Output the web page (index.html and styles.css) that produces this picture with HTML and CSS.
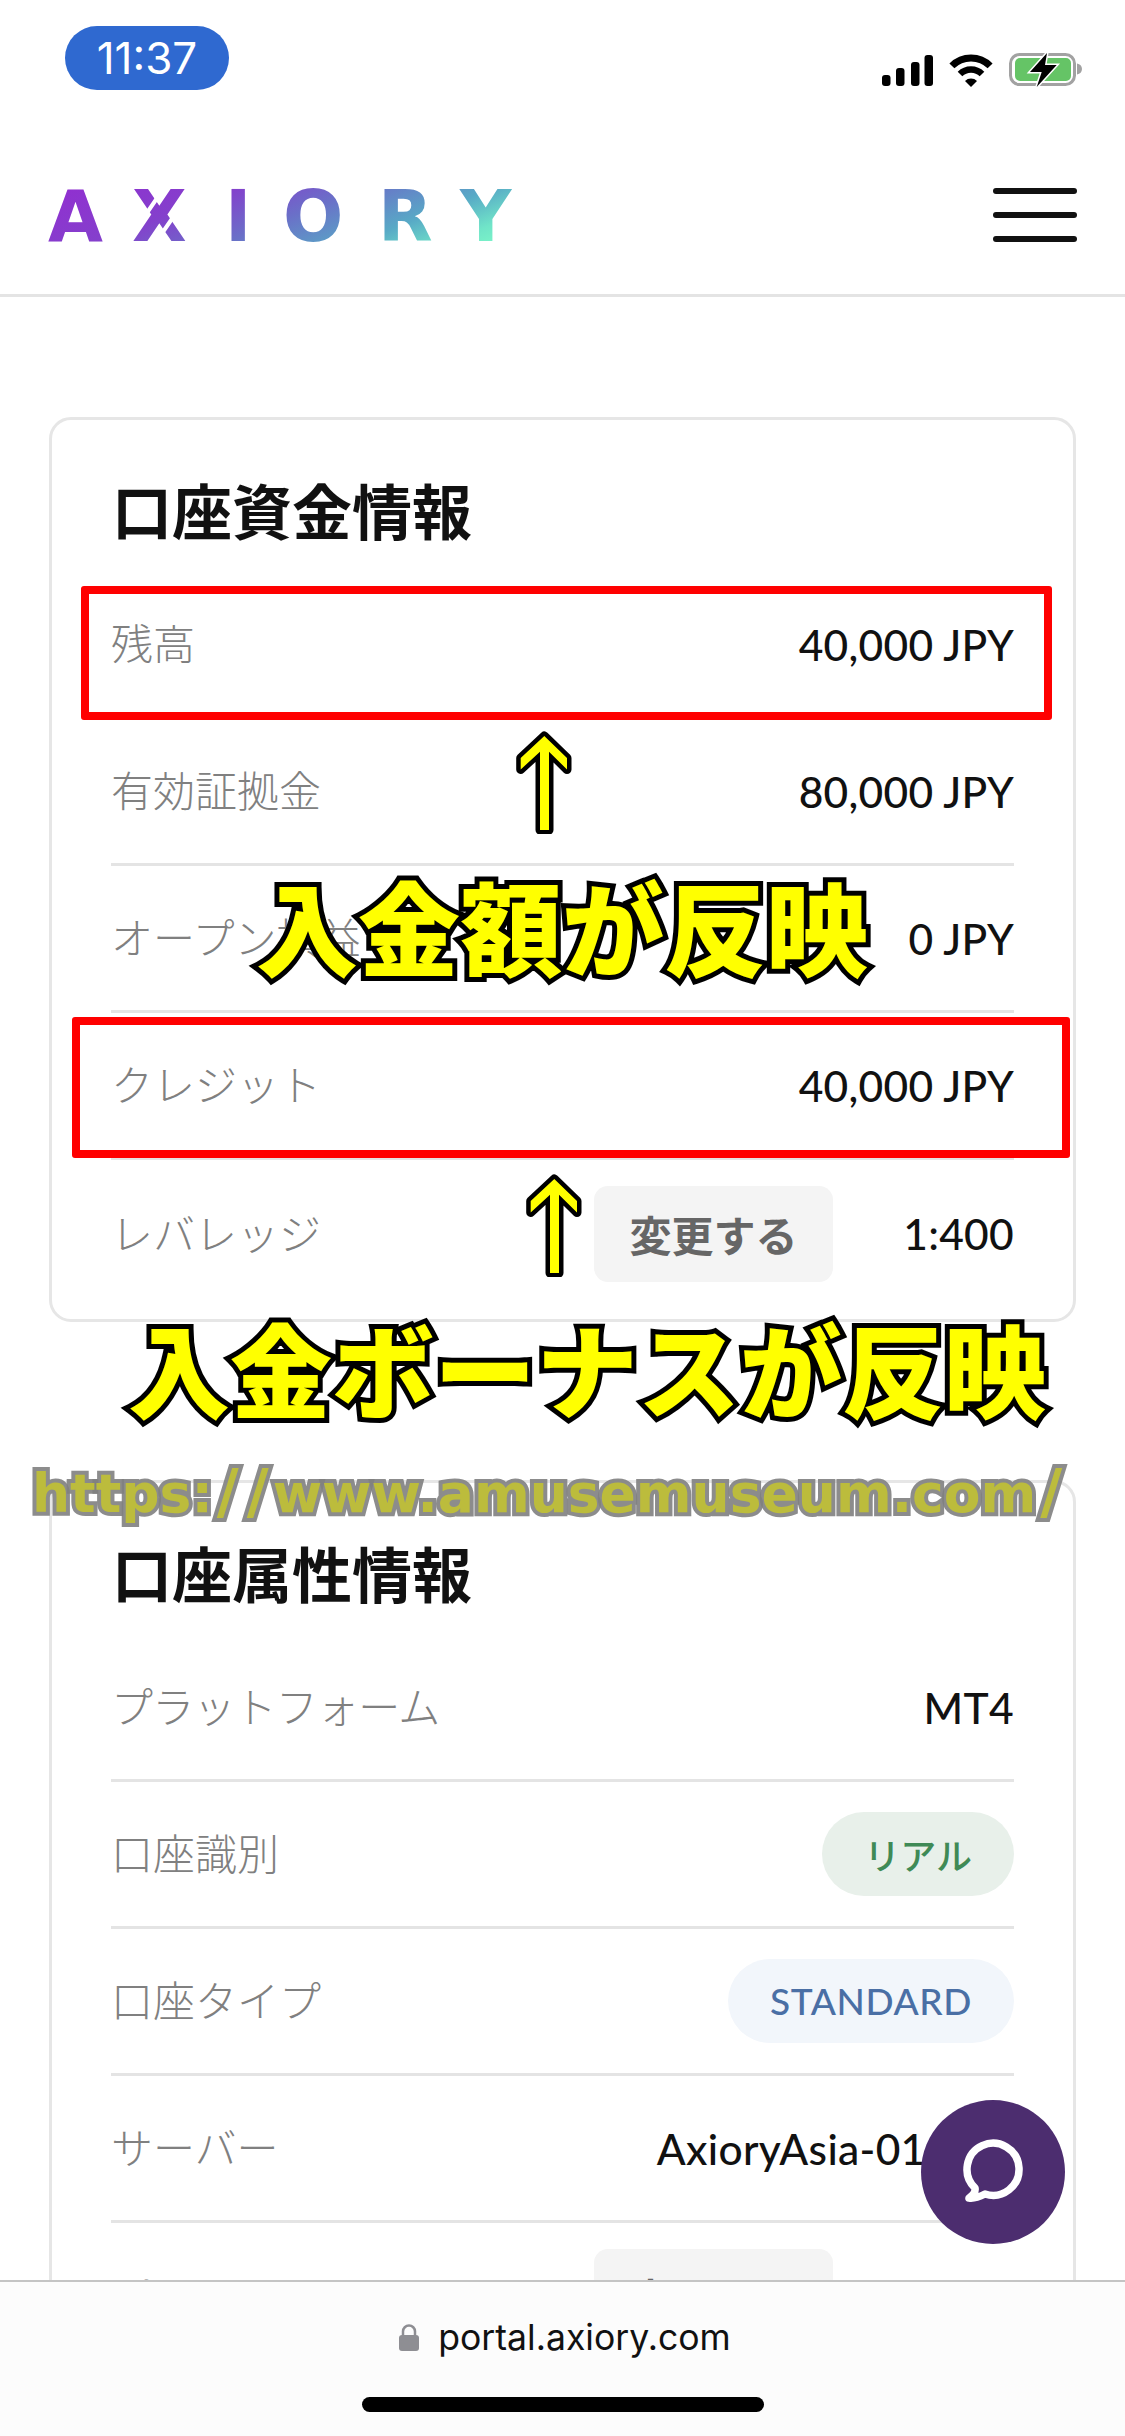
FILE: index.html
```html
<!DOCTYPE html>
<html>
<head>
	<title>AXIORY</title>
	<meta charset="utf-8">
	<link rel="stylesheet" href="styles.css">
</head>
<body>
	<div class="screen">
		<div class="statusbar">
			<div class="time">11:37</div>
			<div class="status-icons">
				<svg width="51" height="31" viewBox="0 0 51 31">
					<rect x="0" y="20" width="8.5" height="11" rx="3"/>
					<rect x="14" y="13" width="8.5" height="18" rx="3"/>
					<rect x="29" y="7" width="8.5" height="24" rx="3"/>
					<rect x="42.5" y="0" width="8.5" height="31" rx="3"/>
				</svg>
				<svg width="46" height="33" viewBox="0 0 46 33">
					<path d="M3.9 11.9A27 27 0 0 1 42.1 11.9" fill="none" stroke="#000" stroke-width="7"/>
					<path d="M12 20A15.5 15.5 0 0 1 34 20" fill="none" stroke="#000" stroke-width="6.5"/>
					<path d="M23 33L17 27A8.5 8.5 0 0 1 29 27Z"/>
				</svg>
				<svg width="73" height="36" viewBox="0 0 73 36">
					<rect x="1.5" y="2.5" width="64" height="30" rx="9" fill="none" stroke="#a2a2a2" stroke-width="3"/>
					<rect x="6" y="6" width="56" height="23" rx="5" fill="#65c466"/>
					<path d="M68 11.5C71 12 73 14 73 17C73 20 71 22 68 22.5Z" fill="#a2a2a2"/>
					<path d="M38 1L21 20H32.700L27.700 35L47.700 13H36Z" stroke="#fff" stroke-width="3" paint-order="stroke"/>
				</svg>
			</div>
		</div>

		<div class="nav">
			<svg class="logo" width="480" height="90" viewBox="0 -18 480 90">
				<defs>
					<linearGradient id="logo-grad" gradientUnits="userSpaceOnUse" x1="20" y1="0" x2="96.500" y2="191">
						<stop offset="0" stop-color="#9030d0"/>
						<stop offset="0.3" stop-color="#8440cc"/>
						<stop offset="0.53" stop-color="#6a70c8"/>
						<stop offset="0.77" stop-color="#58aac6"/>
						<stop offset="0.93" stop-color="#70e4c8"/>
						<stop offset="1" stop-color="#78f0c8"/>
					</linearGradient>
				</defs>
				<text class="logo-text" x="0 84 177 235 330 412" y="52.500" fill="url(#logo-grad)">AXIORY</text>
				<path class="logo-cut" d="M116 0L94 32M128 25L108 54"/>
			</svg>
			<div class="burger">
				<span></span>
				<span></span>
				<span></span>
			</div>
		</div>

		<div class="content">
			<div class="card">
				<h2 class="card-title">口座資金情報</h2>
				<div class="row">
					<span class="label">残高</span>
					<span class="value">40,000 JPY</span>
				</div>
				<div class="row">
					<span class="label">有効証拠金</span>
					<span class="value">80,000 JPY</span>
				</div>
				<div class="row">
					<span class="label">オープン損益</span>
					<span class="value">0 JPY</span>
				</div>
				<div class="row">
					<span class="label">クレジット</span>
					<span class="value">40,000 JPY</span>
				</div>
				<div class="row">
					<span class="label">レバレッジ</span>
					<span class="actions">
						<span class="btn">変更する</span>
						<span class="value value-short">1:400</span>
					</span>
				</div>
			</div>

			<div class="card">
				<h2 class="card-title">口座属性情報</h2>
				<div class="row">
					<span class="label label-tight">プラットフォーム</span>
					<span class="value">MT4</span>
				</div>
				<div class="row">
					<span class="label">口座識別</span>
					<span class="pill pill-green">リアル</span>
				</div>
				<div class="row">
					<span class="label">口座タイプ</span>
					<span class="pill pill-blue">STANDARD</span>
				</div>
				<div class="row">
					<span class="label">サーバー</span>
					<span class="value">AxioryAsia-01 Live</span>
				</div>
				<div class="row">
					<span class="label">パスワード</span>
					<span class="actions">
						<span class="btn">変更する</span>
						<span class="value value-short">&nbsp;</span>
					</span>
				</div>
			</div>
		</div>

		<!-- annotations on top of the screenshot -->
		<div class="redbox redbox-one"></div>
		<div class="redbox redbox-two"></div>
		<svg class="arrow arrow-one" width="56" height="104" viewBox="0 0 56 104">
			<path d="M28.300 6L51 28V39.500L33 21.700V100H24V21.700L4.700 39.500V28Z"/>
		</svg>
		<svg class="arrow arrow-two" width="56" height="104" viewBox="0 0 56 104">
			<path d="M28.300 6L51 28V39.500L33 21.700V100H24V21.700L4.700 39.500V28Z"/>
		</svg>
		<div class="note note-one">入金額が反映</div>
		<div class="note note-two">入金ボーナスが反映</div>
		<div class="watermark">https:<span class="slash">/</span><span class="slash">/</span>www.amusemuseum.com<span class="slash">/</span></div>

		<div class="chat">
			<svg width="64" height="68" viewBox="0 0 64 68">
				<path d="M14 50A26 26 0 1 1 24 56C20 58 14 61 8 60C11 58 15 55 14 50Z" fill="none" stroke="#fff" stroke-width="7.500" stroke-linejoin="round"/>
			</svg>
		</div>

		<div class="urlbar">
			<div class="url">
				<svg width="20" height="27" viewBox="0 0 20 27">
					<path d="M4 12V7.500A6 6 0 0 1 16 7.500V12" fill="none" stroke="#8e8e93" stroke-width="2.500"/>
					<rect x="0" y="11" width="20" height="16" rx="3" fill="#8e8e93"/>
				</svg>
				<span>portal.axiory.com</span>
			</div>
			<div class="homebar"></div>
		</div>
	</div>
</body>
</html>
```

FILE: styles.css
```css
*{
	margin:0;
	padding:0;
	box-sizing:border-box;
}
body{
	background:#fff;
	font-family:"Noto Sans CJK JP",sans-serif;
}
.screen{
	position:relative;
	width:1125px;
	height:2436px;
	overflow:hidden;
	background:#fff;
}

/* status bar */
.statusbar{
	display:flex;
	justify-content:space-between;
	align-items:flex-start;
	height:110px;
	padding:26px 43px 0 65px;
}
.time{
	width:164px;
	height:64px;
	border-radius:32px;
	background:#2f69d0;
	color:#fff;
	font-family:Inter,sans-serif;
	font-size:44px;
	line-height:64px;
	text-align:center;
}
.status-icons{
	display:flex;
	align-items:center;
	gap:15px;
	margin-top:26px;
}

/* nav */
.nav{
	display:flex;
	justify-content:space-between;
	align-items:flex-start;
	height:187px;
	padding:78px 48px 0 48px;
	border-bottom:3px solid #e4e4e4;
}
.logo{
	margin-top:-18px;
}
.logo-text{
	font-family:"DejaVu Sans",sans-serif;
	font-size:71px;
	font-weight:700;
}
.logo-cut{
	fill:none;
	stroke:#fff;
	stroke-width:4;
}
.burger{
	display:flex;
	flex-direction:column;
	gap:18px;
	width:84px;
}
.burger span{
	height:6px;
	border-radius:3px;
	background:#111;
}

/* cards */
.content{
	display:flex;
	flex-direction:column;
	gap:158px;
	padding:120px 49px 0 49px;
}
.card{
	padding:0 59px 12px 59px;
	border:3px solid #e6e6e6;
	border-radius:22px;
	background:#fff;
}
.card-title{
	height:60px;
	margin:59px 0 33px 1px;
	color:#111;
	font-size:60px;
	font-weight:700;
	line-height:60px;
}
.row{
	display:flex;
	justify-content:space-between;
	align-items:center;
	height:147px;
	border-bottom:3px solid #e4e4e4;
}
.row:last-child{
	border-bottom:0;
}
.label{
	padding-bottom:5px;
	color:#808080;
	font-size:42px;
	font-weight:300;
	white-space:nowrap;
}
.label-tight{
	letter-spacing:-0.8px;
}
.value{
	color:#111;
	font-family:Lato,sans-serif;
	font-size:42.5px;
	font-weight:500;
	letter-spacing:0.3px;
	white-space:nowrap;
}
.actions{
	display:flex;
	align-items:center;
}
.value-short{
	display:block;
	width:181px;
	text-align:right;
}
.btn{
	width:239px;
	height:96px;
	border-radius:14px;
	background:#f4f4f4;
	color:#666;
	font-size:42px;
	font-weight:700;
	line-height:96px;
	text-align:center;
}
.pill{
	height:84px;
	padding:0 42px;
	border-radius:42px;
	font-size:36px;
	line-height:84px;
	white-space:nowrap;
}
.pill-green{
	background:#e8f0ea;
	color:#3f8a56;
	font-weight:500;
}
.pill-blue{
	background:#f2f6fb;
	color:#4a6fa5;
	font-family:Lato,sans-serif;
	font-size:37px;
	font-weight:500;
	letter-spacing:0.6px;
}

/* annotations */
.redbox{
	position:absolute;
	border:8px solid #f00;
	border-radius:3px;
}
.redbox-one{
	left:81px;
	top:586px;
	width:971px;
	height:134px;
}
.redbox-two{
	left:72px;
	top:1017px;
	width:998px;
	height:141px;
}
.arrow{
	position:absolute;
}
.arrow path{
	fill:#ff0;
	stroke:#000;
	stroke-width:9;
	stroke-linejoin:round;
	paint-order:stroke;
}
.arrow-one{
	left:516px;
	top:730px;
}
.arrow-two{
	left:526px;
	top:1173px;
}
.note{
	position:absolute;
	color:#ff0;
	font-size:102px;
	font-weight:900;
	line-height:110px;
	white-space:nowrap;
	-webkit-text-stroke:10px #000;
	paint-order:stroke fill;
}
.note-one{
	left:256px;
	top:870px;
}
.note-two{
	left:128px;
	top:1312px;
}
.watermark{
	position:absolute;
	left:32px;
	top:1456px;
	color:#bcbc3c;
	font-family:"DejaVu Sans",sans-serif;
	font-size:53.5px;
	font-weight:700;
	line-height:70px;
	white-space:nowrap;
	-webkit-text-stroke:8px rgba(128,128,128,0.9);
	paint-order:stroke fill;
}
.slash{
	padding:0 4px;
	font-size:60px;
}

/* chat button */
.chat{
	position:absolute;
	left:921px;
	top:2100px;
	display:flex;
	justify-content:center;
	align-items:center;
	width:144px;
	height:144px;
	border-radius:50%;
	background:#4c2d6f;
}

/* safari bottom bar */
.urlbar{
	position:absolute;
	left:0;
	right:0;
	bottom:0;
	display:flex;
	flex-direction:column;
	align-items:center;
	height:156px;
	padding-top:33px;
	border-top:2px solid #c4c4c4;
	background:#fcfcfc;
}
.url{
	display:flex;
	align-items:center;
	gap:19px;
	height:44px;
	margin-left:5px;
	color:#111;
	font-family:Inter,sans-serif;
	font-size:35.6px;
}
.homebar{
	width:402px;
	height:15px;
	margin-top:38px;
	border-radius:8px;
	background:#000;
}
```
